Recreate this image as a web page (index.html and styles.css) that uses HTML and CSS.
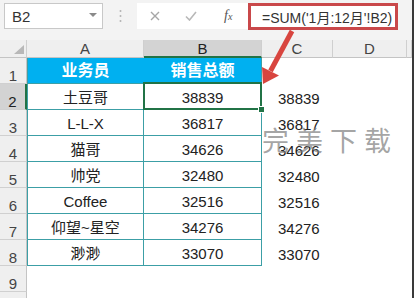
FILE: index.html
```html
<!DOCTYPE html>
<html lang="zh-CN">
<head>
<meta charset="utf-8">
<title>Excel SUM</title>
<link rel="stylesheet" href="styles.css">
</head>
<body>
<div class="frame">
  <div class="toolbar">
    <div class="namebox"><span>B2</span><span class="caret"></span></div>
    <div class="grip">
      <svg width="3" height="14" viewBox="0 0 3 14"><circle cx="1.5" cy="2" r="1" fill="#b4b4b4"/><circle cx="1.5" cy="7" r="1" fill="#b4b4b4"/><circle cx="1.5" cy="12" r="1" fill="#b4b4b4"/></svg>
    </div>
    <div class="fxbox">
      <svg class="ico-x" width="10" height="10" viewBox="0 0 10 10"><path d="M1 1L9 9M9 1L1 9" stroke="#a6a6a6" stroke-width="1.4" fill="none"/></svg>
      <svg class="ico-ok" width="12" height="10" viewBox="0 0 12 10"><path d="M1 5.5L4.5 9L11 1" stroke="#b8b8b8" stroke-width="1.6" fill="none"/></svg>
      <span class="fx">f<small>x</small></span>
    </div>
    <div class="formula">=SUM('1月:12月'!B2)</div>
  </div>

  <div class="sheet">
    <div class="ch corner"><span class="tri"></span></div>
    <div class="ch">A</div>
    <div class="ch chsel">B</div>
    <div class="ch">C</div>
    <div class="ch">D</div>
    <div class="ch"></div>

    <div class="rh">1</div>
    <div class="c ta th">业务员</div>
    <div class="c tb th">销售总额</div>
    <div class="c cc"></div><div class="c"></div><div class="c"></div>

    <div class="rh rhsel">2</div>
    <div class="c ta">土豆哥</div>
    <div class="c tb sel">38839</div>
    <div class="c cc">38839</div><div class="c"></div><div class="c"></div>

    <div class="rh">3</div>
    <div class="c ta">L-L-X</div>
    <div class="c tb">36817</div>
    <div class="c cc">36817</div><div class="c"></div><div class="c"></div>

    <div class="rh">4</div>
    <div class="c ta">猫哥</div>
    <div class="c tb">34626</div>
    <div class="c cc">34626</div><div class="c"></div><div class="c"></div>

    <div class="rh">5</div>
    <div class="c ta">帅党</div>
    <div class="c tb">32480</div>
    <div class="c cc">32480</div><div class="c"></div><div class="c"></div>

    <div class="rh">6</div>
    <div class="c ta">Coffee</div>
    <div class="c tb">32516</div>
    <div class="c cc">32516</div><div class="c"></div><div class="c"></div>

    <div class="rh">7</div>
    <div class="c ta">仰望~星空</div>
    <div class="c tb">34276</div>
    <div class="c cc">34276</div><div class="c"></div><div class="c"></div>

    <div class="rh">8</div>
    <div class="c ta">渺渺</div>
    <div class="c tb">33070</div>
    <div class="c cc">33070</div><div class="c"></div><div class="c"></div>

    <div class="rh">9</div>
    <div class="c"></div><div class="c"></div><div class="c"></div><div class="c"></div><div class="c"></div>

    <div class="rh"></div>
    <div class="c"></div><div class="c"></div><div class="c"></div><div class="c"></div><div class="c"></div>
  </div>
</div>

<div class="watermark">完美下载</div>

<svg class="arrow" width="415" height="298" viewBox="0 0 415 298">
  <path d="M292 31L270.5 71" stroke="#d8453f" stroke-width="5" fill="none"/>
  <polygon points="263,84 262,67 279,75.5" fill="#d8453f"/>
</svg>
</body>
</html>
```

FILE: styles.css
```css
html, body {
  margin: 0;
  padding: 0;
}
body {
  width: 415px;
  height: 298px;
  overflow: hidden;
  background: #ffffff;
  font-family: "Liberation Sans", "Noto Sans CJK SC", sans-serif;
  color: #222;
  position: relative;
}
.frame {
  width: 412px;
  height: 298px;
  border-right: 2px solid #3a3a3a;
  overflow: hidden;
}
.toolbar {
  height: 40px;
  box-sizing: border-box;
  padding-top: 3px;
  background: #f3f3f3;
  display: flex;
  align-items: flex-start;
}
.namebox {
  margin-left: 4px;
  width: 99px;
  height: 26px;
  box-sizing: border-box;
  border: 1px solid #c8c8c8;
  background: #fff;
  display: flex;
  align-items: center;
  justify-content: space-between;
  padding: 0 5px 0 7px;
  font-size: 15px;
  color: #333;
}
.caret {
  width: 0;
  height: 0;
  border-left: 4px solid transparent;
  border-right: 4px solid transparent;
  border-top: 4px solid #8a8a8a;
  margin-top: -3px;
}
.grip {
  width: 34px;
  height: 26px;
  display: flex;
  align-items: center;
  justify-content: center;
}
.fxbox {
  width: 111px;
  height: 26px;
  background: #fff;
  display: flex;
  align-items: center;
}
.ico-x { margin-left: 13px; }
.ico-ok { margin-left: 25px; }
.fx {
  margin-left: 27px;
  font-family: "Liberation Serif", serif;
  font-style: italic;
  font-size: 14px;
  color: #555;
}
.fx small {
  font-size: 10px;
}
.formula {
  width: 150px;
  height: 27px;
  box-sizing: border-box;
  border: 3px solid #c9484a;
  background: #fff;
  display: flex;
  align-items: center;
  padding-left: 11px;
  font-size: 14px;
  color: #333;
  white-space: nowrap;
  overflow: hidden;
}

.sheet {
  display: grid;
  grid-template-columns: 27px 117px 118px 71px 74px 5px;
  grid-template-rows: 18px repeat(10, 26px);
}
.ch {
  box-sizing: border-box;
  background: #efefef;
  border-right: 1px solid #cfcfcf;
  border-bottom: 1px solid #c4c4c4;
  display: flex;
  align-items: center;
  justify-content: center;
  font-size: 15px;
  color: #444;
}
.chsel {
  background: #d3d3d3;
  border-bottom: 2px solid #217346;
  color: #222;
}
.corner {
  position: relative;
}
.tri {
  position: absolute;
  right: 2px;
  bottom: 3px;
  width: 0;
  height: 0;
  border-left: 10px solid transparent;
  border-bottom: 9px solid #b8b8b8;
}
.rh {
  box-sizing: border-box;
  background: #efefef;
  border-right: 1px solid #c4c4c4;
  border-bottom: 1px solid #d0d0d0;
  display: flex;
  align-items: flex-end;
  justify-content: center;
  font-size: 15px;
  line-height: 14px;
  color: #444;
}
.rhsel {
  background: #d3d3d3;
  border-right: 2px solid #217346;
  color: #222;
}
.c {
  box-sizing: border-box;
  display: flex;
  align-items: flex-end;
  font-size: 15px;
  line-height: 18px;
  padding-bottom: 2px;
  color: #222;
  white-space: nowrap;
}
.ta {
  justify-content: center;
  border-left: 1px solid #3c9fa6;
  border-right: 1px solid #3c9fa6;
  border-bottom: 1px solid #3c9fa6;
}
.tb {
  justify-content: center;
  border-right: 1px solid #3c9fa6;
  border-bottom: 1px solid #3c9fa6;
}
.th {
  background: #00b0f0;
  color: #fff;
  font-weight: bold;
  font-size: 16px;
  border-right-color: #00b0f0;
  padding-bottom: 3px;
}
.tb.th {
  border-right-color: #3c9fa6;
}
.cc {
  padding-left: 16px;
}
.sel {
  position: relative;
}
.sel::before {
  content: "";
  position: absolute;
  left: -1px;
  top: -2px;
  right: -1px;
  bottom: -1px;
  border: 2px solid #217346;
}
.sel::after {
  content: "";
  position: absolute;
  right: -4px;
  bottom: -4px;
  width: 5px;
  height: 5px;
  background: #217346;
  border: 1px solid #fff;
}
.watermark {
  position: absolute;
  left: 262px;
  top: 120px;
  font-family: "Noto Sans CJK SC", sans-serif;
  font-weight: 400;
  font-size: 27px;
  letter-spacing: 7px;
  color: rgba(125, 125, 125, 0.7);
  white-space: nowrap;
}
.arrow {
  position: absolute;
  left: 0;
  top: 0;
  pointer-events: none;
}
```
